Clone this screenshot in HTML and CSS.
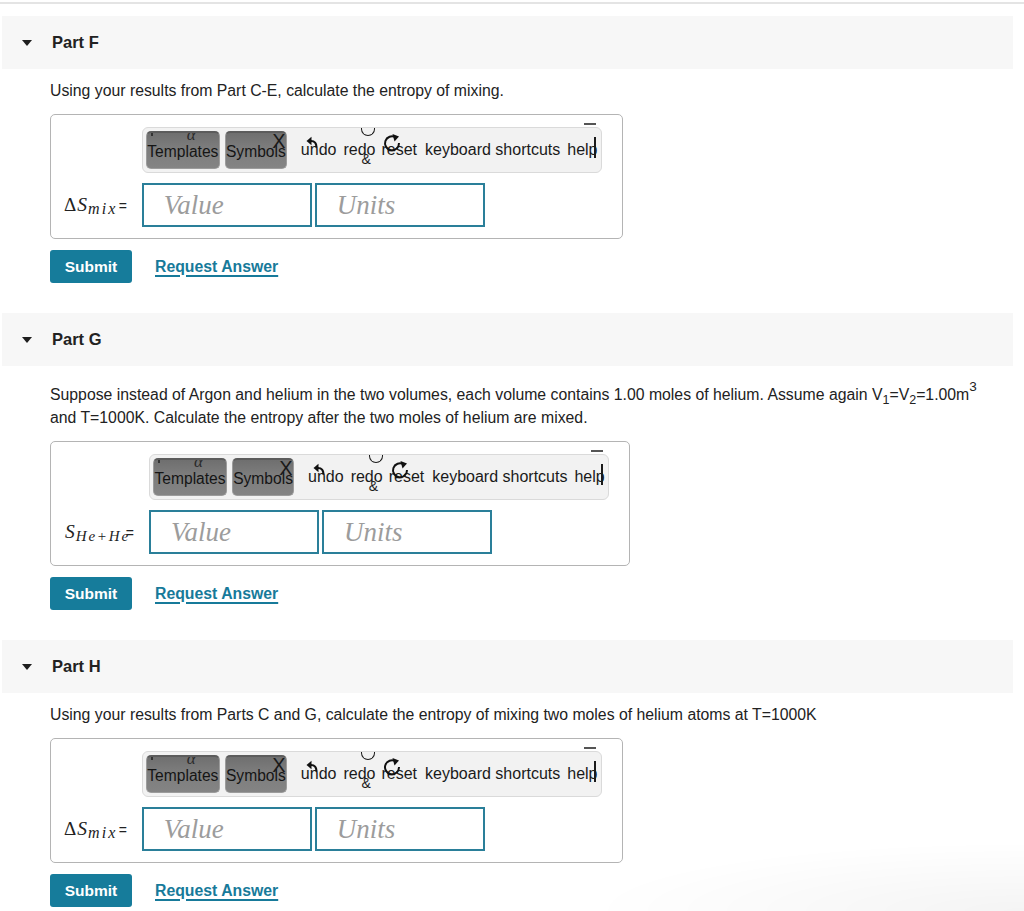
FILE: index.html
```html
<!DOCTYPE html>
<html lang="en">
<head>
<meta charset="utf-8">
<title>Parts F–H</title>
<link rel="stylesheet" href="styles.css">
</head>
<body>
<div class="top-rule"></div>

<section class="part">
  <div class="part-head"><span class="caret"></span><h2>Part F</h2></div>
  <div class="part-body">
    <p class="prompt">Using your results from Part C-E, calculate the entropy of mixing.</p>
    <div class="answer">
      <div class="toolbar">
        <span class="tb-btn tb-templates"><span class="ic-alpha">α</span><span class="ic-tick"></span>Templates</span>
        <span class="tb-btn tb-symbols"><span class="ic-x">X</span>Symbols</span>
        <span class="tb-txt tb-undo"><svg class="ic-undo" viewBox="0 0 12 12"><path d="M10.5 11.5 C10.5 7 8.5 5 5 5" fill="none" stroke="#111" stroke-width="2.2"/><path d="M0.5 5 L5.5 0.8 L5.5 9.2 Z" fill="#111"/></svg>undo</span>
        <span class="tb-txt tb-redo"><span class="ic-smile"></span>redo<span class="ic-amp">&amp;</span></span>
        <span class="tb-txt tb-reset"><svg class="ic-reset" viewBox="0 0 20 20"><path d="M13.5 4.2 A7 7 0 1 0 17 10" fill="none" stroke="#111" stroke-width="2"/><path d="M10.5 1 L17 3.5 L12.5 8.5 Z" fill="#111"/></svg>reset</span>
        <span class="tb-txt tb-keys">keyboard shortcuts</span>
        <span class="tb-txt tb-help"><span class="ic-dash"></span>help<span class="ic-bar"></span></span>
      </div>
      <div class="label"><span class="m-up">Δ</span><span class="m-it">S</span><span class="m-sub">mix</span><span class="m-eq">=</span></div>
      <div class="fields">
        <div class="field">Value</div>
        <div class="field">Units</div>
      </div>
    </div>
    <div class="actions">
      <button class="submit">Submit</button>
      <a class="request" href="#">Request Answer</a>
    </div>
  </div>
</section>

<section class="part">
  <div class="part-head"><span class="caret"></span><h2>Part G</h2></div>
  <div class="part-body">
    <p class="prompt prompt-tall">Suppose instead of Argon and helium in the two volumes, each volume contains 1.00 moles of helium. Assume again V<sub>1</sub>=V<sub>2</sub>=1.00m<sup>3</sup> and T=1000K. Calculate the entropy after the two moles of helium are mixed.</p>
    <div class="answer">
      <div class="toolbar">
        <span class="tb-btn tb-templates"><span class="ic-alpha">α</span><span class="ic-tick"></span>Templates</span>
        <span class="tb-btn tb-symbols"><span class="ic-x">X</span>Symbols</span>
        <span class="tb-txt tb-undo"><svg class="ic-undo" viewBox="0 0 12 12"><path d="M10.5 11.5 C10.5 7 8.5 5 5 5" fill="none" stroke="#111" stroke-width="2.2"/><path d="M0.5 5 L5.5 0.8 L5.5 9.2 Z" fill="#111"/></svg>undo</span>
        <span class="tb-txt tb-redo"><span class="ic-smile"></span>redo<span class="ic-amp">&amp;</span></span>
        <span class="tb-txt tb-reset"><svg class="ic-reset" viewBox="0 0 20 20"><path d="M13.5 4.2 A7 7 0 1 0 17 10" fill="none" stroke="#111" stroke-width="2"/><path d="M10.5 1 L17 3.5 L12.5 8.5 Z" fill="#111"/></svg>reset</span>
        <span class="tb-txt tb-keys">keyboard shortcuts</span>
        <span class="tb-txt tb-help"><span class="ic-dash"></span>help<span class="ic-bar"></span></span>
      </div>
      <div class="label"><span class="m-it">S</span><span class="m-sub m-sub-he">He+He</span><span class="m-eq m-eq-tight">=</span></div>
      <div class="fields">
        <div class="field">Value</div>
        <div class="field">Units</div>
      </div>
    </div>
    <div class="actions">
      <button class="submit">Submit</button>
      <a class="request" href="#">Request Answer</a>
    </div>
  </div>
</section>

<section class="part">
  <div class="part-head"><span class="caret"></span><h2>Part H</h2></div>
  <div class="part-body">
    <p class="prompt">Using your results from Parts C and G, calculate the entropy of mixing two moles of helium atoms at T=1000K</p>
    <div class="answer">
      <div class="toolbar">
        <span class="tb-btn tb-templates"><span class="ic-alpha">α</span><span class="ic-tick"></span>Templates</span>
        <span class="tb-btn tb-symbols"><span class="ic-x">X</span>Symbols</span>
        <span class="tb-txt tb-undo"><svg class="ic-undo" viewBox="0 0 12 12"><path d="M10.5 11.5 C10.5 7 8.5 5 5 5" fill="none" stroke="#111" stroke-width="2.2"/><path d="M0.5 5 L5.5 0.8 L5.5 9.2 Z" fill="#111"/></svg>undo</span>
        <span class="tb-txt tb-redo"><span class="ic-smile"></span>redo<span class="ic-amp">&amp;</span></span>
        <span class="tb-txt tb-reset"><svg class="ic-reset" viewBox="0 0 20 20"><path d="M13.5 4.2 A7 7 0 1 0 17 10" fill="none" stroke="#111" stroke-width="2"/><path d="M10.5 1 L17 3.5 L12.5 8.5 Z" fill="#111"/></svg>reset</span>
        <span class="tb-txt tb-keys">keyboard shortcuts</span>
        <span class="tb-txt tb-help"><span class="ic-dash"></span>help<span class="ic-bar"></span></span>
      </div>
      <div class="label"><span class="m-up">Δ</span><span class="m-it">S</span><span class="m-sub">mix</span><span class="m-eq">=</span></div>
      <div class="fields">
        <div class="field">Value</div>
        <div class="field">Units</div>
      </div>
    </div>
    <div class="actions">
      <button class="submit">Submit</button>
      <a class="request" href="#">Request Answer</a>
    </div>
  </div>
</section>

<div class="corner-shade"></div>
</body>
</html>
```

FILE: styles.css
```css
* { box-sizing: border-box; }

html, body {
  margin: 0;
  padding: 0;
  background: #ffffff;
  color: #222222;
  font-family: "Liberation Sans", Arial, Helvetica, sans-serif;
}

body {
  padding-top: 2px;
  overflow: hidden;
}

.top-rule {
  height: 2px;
  background: #e4e4e4;
}

.part {
  margin-bottom: 30px;
}

.part-head {
  margin: 12px 11px 0 2px;
  height: 53px;
  background: #f7f7f7;
  display: flex;
  align-items: center;
  padding-left: 20px;
}

.caret {
  width: 0;
  height: 0;
  border-left: 5.5px solid transparent;
  border-right: 5.5px solid transparent;
  border-top: 6.5px solid #1e1e1e;
  margin-top: 1px;
}

.part-head h2 {
  margin: 0 0 0 20px;
  font-size: 16.5px;
  font-weight: bold;
  color: #222;
}

.part-body {
  padding-left: 50px;
  padding-right: 40px;
}

.prompt {
  margin: 10px 0 0 0;
  font-size: 15.8px;
  line-height: 23px;
  color: #222;
}

.prompt-tall {
  margin-top: 17px;
}

.prompt sub, .prompt sup {
  font-size: 12.5px;
  line-height: 0;
}

.prompt sub { vertical-align: -4px; }
.prompt sup { vertical-align: 9px; font-size: 13.5px; }

.answer {
  margin-top: 12px;
  display: inline-grid;
  grid-template-columns: auto auto;
  row-gap: 10px;
  padding: 12px 20px 11px 13px;
  border: 1px solid #b4b4b4;
  border-radius: 5px;
}

.toolbar {
  grid-column: 2;
  grid-row: 1;
  width: 460px;
  height: 46px;
  display: flex;
  align-items: center;
  padding-left: 3px;
  background: #f2f2f2;
  border: 1px solid #dadada;
  border-radius: 6px;
  font-size: 16px;
  color: #1a1a1a;
}

.tb-btn {
  position: relative;
  height: 38px;
  display: flex;
  align-items: center;
  justify-content: center;
  padding-top: 3px;
  font-size: 15.6px;
  color: #151515;
  background: linear-gradient(#6f6f6f, #7c7c7c 40%, #848484);
  border: 1px solid #9c9c9c;
  border-top: 2px solid #5c5c5c;
  border-radius: 5px;
  overflow: hidden;
  white-space: nowrap;
}

.tb-templates { width: 74px; }
.tb-symbols { width: 62px; margin-left: 5px; }

.ic-alpha {
  position: absolute;
  top: -8px;
  left: 40px;
  font-family: "Liberation Serif", serif;
  font-style: italic;
  font-size: 17px;
  color: #2a2a2a;
}

.ic-tick {
  position: absolute;
  top: 0;
  left: 4px;
  width: 2px;
  height: 3px;
  background: #333;
}

.ic-x {
  position: absolute;
  top: -4px;
  right: 0px;
  font-size: 21px;
  color: #1a1a1a;
  transform: scaleX(0.95);
}

.tb-txt {
  position: relative;
  white-space: nowrap;
  margin-left: 7px;
}

.tb-undo { margin-left: 14px; }
.tb-reset { margin-left: 6px; }
.tb-keys { margin-left: 8px; }

.ic-undo {
  position: absolute;
  left: 5px;
  top: -5px;
  width: 12px;
  height: 12px;
}

.ic-smile {
  position: absolute;
  left: 18px;
  top: -13px;
  width: 14px;
  height: 8px;
  border: 1.6px solid #1a1a1a;
  border-top: none;
  border-radius: 0 0 8px 8px;
}

.ic-amp {
  position: absolute;
  left: 18px;
  top: 10px;
  font-size: 14px;
  color: #1a1a1a;
}

.ic-reset {
  position: absolute;
  left: 1px;
  top: -8px;
  width: 20px;
  height: 20px;
}

.ic-dash {
  position: absolute;
  right: 2px;
  top: -18px;
  width: 12px;
  height: 1.5px;
  background: #555;
}

.ic-bar {
  position: absolute;
  right: 2px;
  top: -4px;
  width: 1.5px;
  height: 21px;
  background: #1a1a1a;
}

.label {
  grid-column: 1;
  grid-row: 2;
  display: flex;
  align-items: baseline;
  align-self: center;
  padding-right: 15px;
  white-space: nowrap;
  color: #222;
}

.m-up {
  font-family: "Liberation Serif", "DejaVu Serif", serif;
  font-size: 19px;
}

.m-it {
  font-family: "Liberation Serif", "DejaVu Serif", serif;
  font-style: italic;
  font-size: 19.5px;
  margin-left: 1px;
}

.m-sub {
  font-family: "Liberation Serif", "DejaVu Serif", serif;
  font-style: italic;
  font-size: 16px;
  letter-spacing: 2.2px;
  position: relative;
  top: 3px;
  margin-left: 1px;
}

.m-sub-he {
  font-size: 15px;
  letter-spacing: 1.8px;
}

.m-eq {
  font-size: 14px;
  margin-left: 1px;
}

.m-eq-tight { margin-left: -4px; }

.fields {
  grid-column: 2;
  grid-row: 2;
  display: flex;
  gap: 3px;
}

.field {
  width: 170px;
  height: 44px;
  border: 2px solid #2a7f99;
  padding-left: 20px;
  display: flex;
  align-items: center;
  font-family: "Liberation Serif", "Times New Roman", serif;
  font-style: italic;
  font-size: 27px;
  color: #9c9c9c;
}

.actions {
  margin-top: 11px;
  display: flex;
  align-items: center;
}

.submit {
  width: 82px;
  height: 33px;
  border: none;
  border-radius: 3px;
  background: #167c9b;
  color: #ffffff;
  font-family: "Liberation Sans", Arial, sans-serif;
  font-weight: bold;
  font-size: 15.5px;
  padding: 0;
}

.request {
  margin-left: 23px;
  color: #177a9a;
  font-weight: bold;
  font-size: 15.8px;
  text-decoration: underline;
  text-decoration-thickness: 2px;
  text-underline-offset: 3px;
}

.corner-shade {
  position: fixed;
  right: 0;
  bottom: 0;
  width: 440px;
  height: 70px;
  pointer-events: none;
  background: radial-gradient(ellipse at 100% 100%, rgba(0,0,0,0.045), rgba(0,0,0,0) 70%);
}
```
